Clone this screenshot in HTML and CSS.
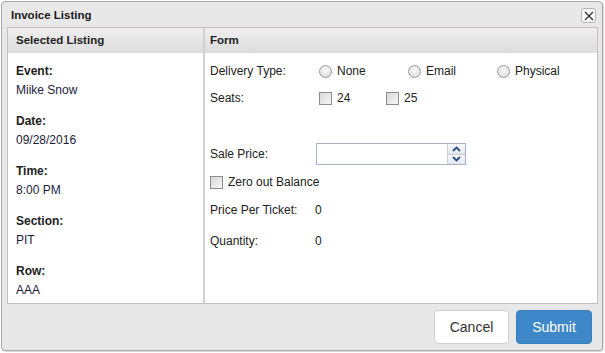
FILE: index.html
```html
<!DOCTYPE html>
<html lang="en">
<head>
    <meta charset="UTF-8">
    <meta name="viewport" content="width=device-width, initial-scale=1.0">
    <title>Invoice Listing</title>
    <link rel="stylesheet" href="styles.css">
</head>
<body>
    <div class="dialog">
        <div class="titlebar">
            <span class="title">Invoice Listing</span>
            <button class="close-btn" title="Close">
                <svg width="10" height="10" viewBox="0 0 10 10"><path d="M1 1 L9 9 M9 1 L1 9" stroke="#333" stroke-width="1.3" fill="none"/></svg>
            </button>
        </div>

        <div class="panel">
            <!-- Selected Listing column -->
            <div class="col col-left">
                <div class="col-head">Selected Listing</div>
                <div class="col-body listing">
                    <div class="item"><div class="item-label">Event:</div><div class="item-value">Miike Snow</div></div>
                    <div class="item"><div class="item-label">Date:</div><div class="item-value">09/28/2016</div></div>
                    <div class="item"><div class="item-label">Time:</div><div class="item-value">8:00 PM</div></div>
                    <div class="item"><div class="item-label">Section:</div><div class="item-value">PIT</div></div>
                    <div class="item"><div class="item-label">Row:</div><div class="item-value">AAA</div></div>
                </div>
            </div>

            <!-- Form column -->
            <div class="col col-right">
                <div class="col-head">Form</div>
                <div class="col-body form">
                    <div class="row row-delivery">
                        <span class="field-label">Delivery Type:</span>
                        <label class="opt opt-radio"><span class="radio"></span>None</label>
                        <label class="opt opt-radio"><span class="radio"></span>Email</label>
                        <label class="opt opt-radio"><span class="radio"></span>Physical</label>
                    </div>
                    <div class="row row-seats">
                        <span class="field-label">Seats:</span>
                        <label class="opt opt-seat"><span class="check"></span>24</label>
                        <label class="opt opt-seat"><span class="check"></span>25</label>
                    </div>
                    <div class="row row-price">
                        <span class="field-label">Sale Price:</span>
                        <div class="spinner">
                            <input type="text" class="spin-input">
                            <div class="spin-btns">
                                <span class="spin-up"><svg width="9" height="6" viewBox="0 0 9 6"><path d="M1 5 L4.5 1.5 L8 5" stroke="#2b4f86" stroke-width="1.8" fill="none"/></svg></span>
                                <span class="spin-down"><svg width="9" height="6" viewBox="0 0 9 6"><path d="M1 1 L4.5 4.5 L8 1" stroke="#2b4f86" stroke-width="1.8" fill="none"/></svg></span>
                            </div>
                        </div>
                    </div>
                    <div class="row row-zero">
                        <label class="opt"><span class="check"></span>Zero out Balance</label>
                    </div>
                    <div class="row row-ppt">
                        <span class="field-label">Price Per Ticket:</span>
                        <span class="field-value">0</span>
                    </div>
                    <div class="row row-qty">
                        <span class="field-label">Quantity:</span>
                        <span class="field-value">0</span>
                    </div>
                </div>
            </div>
        </div>

        <div class="footer">
            <button class="btn btn-cancel">Cancel</button>
            <button class="btn btn-submit">Submit</button>
        </div>
    </div>
</body>
</html>
```

FILE: styles.css
```css
body {
    margin: 0;
    padding: 0;
    background: #ffffff;
    font-family: "Liberation Sans", Arial, sans-serif;
    font-size: 12px;
    color: #222;
}
.dialog {
    width: 600px;
    height: 348px;
    margin: 1px;
    border: 1px solid #a9a9a9;
    border-radius: 4px;
    background: #e8e8e8;
    display: flex;
    flex-direction: column;
    box-shadow: 1px 1px 1px rgba(0, 0, 0, 0.15);
}
.titlebar {
    height: 25px;
    display: flex;
    align-items: center;
    justify-content: space-between;
    padding: 0 6px 0 9px;
}
.title {
    font-weight: bold;
    font-size: 11.5px;
    color: #1a1a1a;
}
.close-btn {
    width: 15px;
    height: 15px;
    padding: 0;
    border: 1px solid #b5b5b5;
    border-radius: 3px;
    background: #f8f8f8;
    display: flex;
    align-items: center;
    justify-content: center;
    margin-top: 2px;
}
.panel {
    height: 275px;
    margin: 0 4px 0 5px;
    border: 1px solid #c7bfbf;
    background: #fff;
    display: flex;
}
.col {
    display: flex;
    flex-direction: column;
}
.col-left {
    width: 195px;
    border-right: 2px solid #d0d0d0;
}
.col-right {
    flex: 1;
}
.col-head {
    height: 25px;
    line-height: 25px;
    padding-left: 8px;
    font-weight: bold;
    font-size: 11.5px;
    color: #222;
    background: linear-gradient(#efefef, #dcdcdc);
}
.col-right .col-head {
    padding-left: 5px;
}
.listing {
    padding: 10px 8px 0;
}
.item {
    height: 50px;
}
.item-label {
    font-weight: bold;
    height: 19px;
    line-height: 16px;
}
.item-value {
    color: #1c1c3a;
    line-height: 16px;
}
.form {
    padding: 8px 5px 0;
}
.row {
    display: flex;
    align-items: center;
    height: 20px;
}
.row-seats {
    margin-top: 7px;
}
.row-price {
    margin-top: 35px;
    height: 22px;
}
.row-zero {
    margin-top: 7px;
}
.row-ppt {
    margin-top: 8px;
}
.row-qty {
    margin-top: 11px;
}
.field-label {
    width: 105px;
    flex-shrink: 0;
}
.field-value {
    color: #222;
}
.opt {
    display: flex;
    align-items: center;
    gap: 5px;
}
.opt-radio {
    width: 89px;
    margin-left: 4px;
    gap: 5px;
}
.opt-radio + .opt-radio {
    margin-left: 0;
}
.opt-seat {
    width: 67px;
    margin-left: 4px;
}
.opt-seat + .opt-seat {
    margin-left: 0;
}
.radio {
    width: 11px;
    height: 11px;
    border: 1px solid #9a9a9a;
    border-radius: 50%;
    background: radial-gradient(circle at 50% 40%, #fafafa, #d6d6d6);
}
.check {
    width: 11px;
    height: 11px;
    border: 1px solid #8c8c8c;
    background: linear-gradient(135deg, #d8d8d8, #f6f6f6);
}
.spinner {
    display: flex;
    width: 148px;
    height: 20px;
    margin-left: 1px;
    border: 1px solid #a7b2c6;
    background: #fff;
}
.spin-input {
    flex: 1;
    border: none;
    padding: 0 4px;
    font-family: inherit;
    font-size: 12px;
    outline: none;
    min-width: 0;
}
.spin-btns {
    width: 17px;
    border-left: 1px solid #c8d0dc;
    display: flex;
    flex-direction: column;
}
.spin-up, .spin-down {
    flex: 1;
    display: flex;
    align-items: center;
    justify-content: center;
    background: linear-gradient(#f7f9fc, #e2e8f0);
}
.spin-up {
    border-bottom: 1px solid #c8d0dc;
}
.footer {
    flex: 1;
    display: flex;
    justify-content: flex-end;
    align-items: center;
    gap: 7px;
    padding-right: 10px;
}
.btn {
    height: 34px;
    border-radius: 4px;
    font-family: "Liberation Sans", Arial, sans-serif;
    font-size: 14px;
    cursor: pointer;
}
.btn-cancel {
    width: 75px;
    background: #fff;
    border: 1px solid #cfcfcf;
    color: #333;
}
.btn-submit {
    width: 76px;
    background: #3e88c9;
    border: 1px solid #3a80bd;
    color: #fff;
}
```
